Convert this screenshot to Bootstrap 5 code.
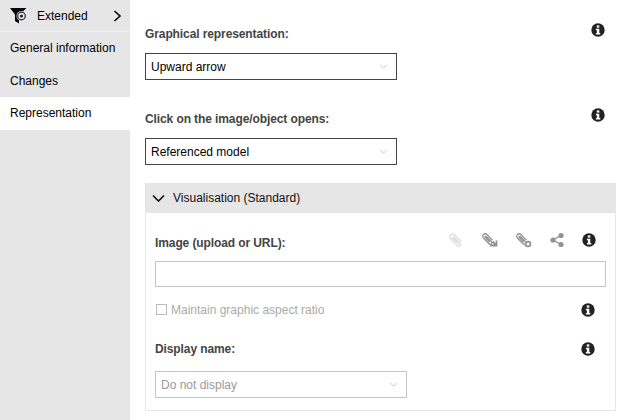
<!DOCTYPE html>
<html lang="en">
  <head>
    <meta charset="UTF-8" />
    <title>Representation</title>
    <link href="https://cdn.jsdelivr.net/npm/bootstrap@5.3.0/dist/css/bootstrap.min.css" rel="stylesheet" />
    <style>
      html, body { height: 420px; overflow: hidden; }
      body { font-family: "Liberation Sans", Arial, sans-serif; font-size: 12px; color: #000; background: #fff; }
      .side-panel { width: 130px; height: 420px; background: #e6e6e6; flex: none; }
      .side-head { height: 32px; padding: 0 8px 0 10px; border-bottom: 1px solid #f0f0f0; }
      .side-head span { margin-left: 10px; }
      .side-link { display: block; height: 32px; line-height: 32px; padding-left: 10px; color: #000; text-decoration: none; }
      .side-link.first-link { height: 33px; line-height: 33px; }
      .side-link.is-active { background: #fff; height: 33px; }
      .main-pane { width: 500px; padding: 0 14px 0 15px; }
      .field-label { font-weight: 700; color: #444; font-size: 12px; letter-spacing: -0.1px; }
      .pick-box { width: 252px; height: 27px; min-height: 0; padding: 0 0 0 5px; font-size: 12px; border: 1px solid #444; border-radius: 0; color: #000; background-size: 11px 9px; background-position: right 7px center;
        background-image: url("data:image/svg+xml,%3csvg xmlns='http://www.w3.org/2000/svg' viewBox='0 0 16 16'%3e%3cpath fill='none' stroke='%23bbb' stroke-width='1.6' d='M2 5l6 6 6-6'/%3e%3c/svg%3e"); }
      .pick-box:disabled { border-color: #c4c4c4; color: #999; background-color: #fff; }
      .top-field { height: 85px; }
      .top-field .label-row { padding-top: 25px; height: 53px; }
      .info-top { margin-right: 11px; margin-top: -2px; }
      .vis-panel { margin-top: 13px; border: 1px solid #e6e6e6; border-top: 0; height: 228px; }
      .vis-head { height: 30px; background: #e6e6e6; padding-left: 7px; margin: 0 -1px; color: #111; }
      .vis-head span { margin-left: 8px; }
      .vis-body { padding: 0 9px; }
      .img-row { height: 48px; padding-top: 21px; }
      .tool-row { gap: 17px; margin-right: 10px; margin-top: -2px; }
      .url-box { height: 26px; min-height: 0; border: 1px solid #c4c4c4; border-radius: 0; padding: 0 6px; font-size: 12px; }
      .keep-row { height: 23px; margin-top: 11px; color: #aaa; }
      .keep-row .form-check-input { width: 11px; height: 11px; margin: 0 4px 0 1px; border: 1px solid #bbb; border-radius: 0; background-color: #fff; opacity: 1; }
      .name-row { height: 22px; margin-top: 17px; margin-bottom: 11px; }
      .info-side { margin-right: 11px; }
      .tool-off { color: #e0e0e0; }
      .tool-on { color: #929292; }
    </style>
  </head>
  <body>
    <svg width="0" height="0" class="position-absolute">
      <symbol id="info" viewBox="0 0 14 14">
        <circle cx="7" cy="7" r="6.7" fill="#222" />
        <rect x="5.8" y="2.4" width="2.5" height="2.2" fill="#fff" />
        <path d="M4.9 5.7h3.4v4.3h1v1.5H4.9V10h1V7.2h-1z" fill="#fff" />
      </symbol>
      <symbol id="clip" viewBox="0 0 16 16">
        <path d="M13 9.5 7 3.2C5.7 1.9 3.9 1.8 2.8 2.9S1.7 5.8 3 7.1l6.2 6.4c.9.9 2 .9 2.7.2s.7-1.8-.2-2.7L6.2 5.4c-.4-.4-.9-.5-1.2-.2s-.3.8.1 1.2l4.8 5" fill="none" stroke="currentColor" stroke-width="1.5" />
      </symbol>
    </svg>

    <div class="d-flex">
      <div class="side-panel">
        <div class="side-head d-flex align-items-center">
          <svg width="17" height="16" viewBox="0 0 17 16">
            <path d="M0 0h16.5L9 7v8.5L5 13V6.5z" fill="#000" />
            <circle cx="11.5" cy="8" r="5" fill="#e6e6e6" />
            <circle cx="11.5" cy="8" r="3.8" fill="none" stroke="#223" stroke-width="1.2" />
            <circle cx="11.5" cy="8" r="1.6" fill="#223" />
          </svg>
          <span>Extended</span>
          <svg class="ms-auto" width="9" height="12" viewBox="0 0 9 12">
            <path d="M1.5 1l5.5 5-5.5 5" fill="none" stroke="#000" stroke-width="1.6" />
          </svg>
        </div>
        <a class="side-link first-link" href="#">General information</a>
        <a class="side-link" href="#">Changes</a>
        <a class="side-link is-active" href="#">Representation</a>
      </div>

      <div class="main-pane">
        <div class="top-field">
          <div class="label-row d-flex justify-content-between align-items-start">
            <label class="field-label">Graphical representation:</label>
            <svg class="info-top" width="14" height="14"><use href="#info" /></svg>
          </div>
          <select class="form-select pick-box"><option>Upward arrow</option></select>
        </div>
        <div class="top-field">
          <div class="label-row d-flex justify-content-between align-items-start">
            <label class="field-label">Click on the image/object opens:</label>
            <svg class="info-top" width="14" height="14"><use href="#info" /></svg>
          </div>
          <select class="form-select pick-box"><option>Referenced model</option></select>
        </div>

        <div class="vis-panel">
          <div class="vis-head d-flex align-items-center">
            <svg width="13" height="9" viewBox="0 0 13 9">
              <path d="M1 1.5l5.5 5.5L12 1.5" fill="none" stroke="#111" stroke-width="1.6" />
            </svg>
            <span>Visualisation (Standard)</span>
          </div>
          <div class="vis-body">
            <div class="img-row d-flex justify-content-between align-items-start">
              <label class="field-label">Image (upload or URL):</label>
              <div class="tool-row d-flex align-items-center">
                <svg width="16" height="16" class="tool-off"><use href="#clip" /></svg>
                <svg width="17" height="16" viewBox="0 0 17 16" class="tool-on">
                  <use href="#clip" width="14" height="14" />
                  <path d="M9 13.5h6.5V8.5M15.5 13.5l-4-4" fill="none" stroke="currentColor" stroke-width="1.8" />
                </svg>
                <svg width="17" height="16" viewBox="0 0 17 16" class="tool-on">
                  <use href="#clip" width="14" height="14" />
                  <circle cx="13" cy="12" r="3.4" fill="#fff" />
                  <circle cx="13" cy="12" r="2.4" fill="#fff" stroke="currentColor" stroke-width="1.8" />
                </svg>
                <svg width="16" height="16" viewBox="0 0 16 16" class="tool-on">
                  <path d="M12 3.5 4 8l8 4.5" fill="none" stroke="currentColor" stroke-width="1.4" />
                  <circle cx="12" cy="3.5" r="2.6" fill="currentColor" />
                  <circle cx="4" cy="8" r="2.6" fill="currentColor" />
                  <circle cx="12" cy="12.5" r="2.6" fill="currentColor" />
                </svg>
                <svg width="14" height="14"><use href="#info" /></svg>
              </div>
            </div>
            <input class="form-control url-box" type="text" />
            <div class="keep-row d-flex align-items-center justify-content-between">
              <div class="d-flex align-items-center">
                <input class="form-check-input" type="checkbox" disabled />
                <span>Maintain graphic aspect ratio</span>
              </div>
              <svg class="info-side" width="14" height="14"><use href="#info" /></svg>
            </div>
            <div class="name-row d-flex align-items-center justify-content-between">
              <label class="field-label">Display name:</label>
              <svg class="info-side" width="14" height="14"><use href="#info" /></svg>
            </div>
            <select class="form-select pick-box" disabled><option>Do not display</option></select>
          </div>
        </div>
      </div>
    </div>
    <script src="https://cdn.jsdelivr.net/npm/bootstrap@5.3.0/dist/js/bootstrap.bundle.min.js"></script>
  </body>
</html>
